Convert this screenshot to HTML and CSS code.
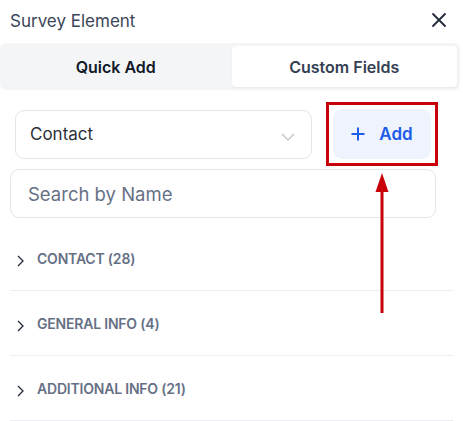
FILE: index.html
```html
<!DOCTYPE html>
<html>
<head>
<meta charset="utf-8">
<link rel="stylesheet" href="styles.css">
</head>
<body>
<div class="panel">
  <div class="header">
    <span class="title">Survey Element</span>
    <svg class="close" width="16" height="16" viewBox="0 0 16 16"><path d="M2 2L14 14M14 2L2 14" stroke="#1f2937" stroke-width="1.8" stroke-linecap="round"/></svg>
  </div>
  <div class="tabs">
    <div class="tab tab-quick">Quick Add</div>
    <div class="tab tab-custom">Custom Fields</div>
  </div>
  <div class="controls">
    <div class="select">
      <span>Contact</span>
      <svg width="14" height="8" viewBox="0 0 14 8"><path d="M1 1L7 7L13 1" fill="none" stroke="#b8bcc4" stroke-width="1.1"/></svg>
    </div>
    <div class="add-btn">
      <svg width="14" height="14" viewBox="0 0 14 14"><path d="M7 0.5V13.5M0.5 7H13.5" stroke="#1d5ce8" stroke-width="2"/></svg>
      <span>Add</span>
    </div>
  </div>
  <div class="search">Search by Name</div>
  <div class="list">
    <div class="row"><svg width="7" height="12" viewBox="0 0 7 12"><path d="M1 1L6 6L1 11" fill="none" stroke="#1f2937" stroke-width="1.3"/></svg><span>CONTACT (28)</span></div>
    <div class="row"><svg width="7" height="12" viewBox="0 0 7 12"><path d="M1 1L6 6L1 11" fill="none" stroke="#1f2937" stroke-width="1.3"/></svg><span>GENERAL INFO (4)</span></div>
    <div class="row"><svg width="7" height="12" viewBox="0 0 7 12"><path d="M1 1L6 6L1 11" fill="none" stroke="#1f2937" stroke-width="1.3"/></svg><span>ADDITIONAL INFO (21)</span></div>
  </div>
  <div class="highlight"></div>
  <svg class="arrow" width="16" height="142" viewBox="0 0 16 142"><path d="M8 0L14.5 19H1.5Z" fill="#c8000a"/><rect x="6.5" y="18" width="3" height="122" fill="#c8000a"/></svg>
</div>
</body>
</html>
```
FILE: styles.css
```css
* { box-sizing: border-box; }
body {
  margin: 0;
  background: #ffffff;
  font-family: Inter, "Noto Sans", "Liberation Sans", sans-serif;
}
.panel {
  position: relative;
  width: 463px;
  height: 421px;
  overflow: hidden;
}
.header {
  height: 43px;
  display: flex;
  align-items: center;
  justify-content: space-between;
  padding: 0 16px 2px 10px;
}
.title {
  font-size: 17px;
  color: #3b4658;
}
.close { margin-top: -2px; }
.tabs {
  width: 460px;
  height: 47px;
  background: #f4f5f7;
  border-radius: 6px;
  padding: 3px;
  display: flex;
  gap: 3px;
}
.tab {
  flex: 1;
  display: flex;
  align-items: center;
  justify-content: center;
  font-size: 16px;
  font-weight: 600;
  border-radius: 4px;
}
.tab-quick { color: #111827; }
.tab-custom {
  background: #ffffff;
  color: #344054;
  box-shadow: 0 1px 2px rgba(16, 24, 40, 0.05);
}
.controls {
  display: flex;
  align-items: center;
  padding: 19px 0 0 15px;
  gap: 21px;
}
.select {
  width: 297px;
  height: 49px;
  border: 1px solid #e3e5e9;
  border-radius: 9px;
  display: flex;
  align-items: center;
  justify-content: space-between;
  padding: 0 16px 0 14px;
  font-size: 17px;
  color: #2b2f36;
}
.select svg { margin-top: 5px; }
.add-btn {
  width: 98px;
  height: 50px;
  background: #eef3fe;
  border-radius: 9px;
  display: flex;
  align-items: center;
  justify-content: center;
  gap: 14px;
  font-size: 17px;
  font-weight: 600;
  color: #1d5ce8;
}
.search {
  margin: 10px 0 0 10px;
  width: 426px;
  height: 49px;
  border: 1px solid #e3e5e9;
  border-radius: 9px;
  display: flex;
  align-items: center;
  padding-left: 17px;
  font-size: 18.5px;
  color: #667085;
}
.list {
  margin: 8px 0 0 10px;
  width: 443px;
}
.row {
  height: 65px;
  border-bottom: 1px solid #eceef2;
  display: flex;
  align-items: center;
  padding-left: 7px;
  gap: 13px;
  font-size: 14px;
  font-weight: 600;
  letter-spacing: -0.2px;
  color: #667085;
}
.row span { margin-top: 1px; }
.row svg { margin-top: 5px; }
.highlight {
  position: absolute;
  left: 326px;
  top: 102px;
  width: 112px;
  height: 64px;
  border: 3px solid #c8000a;
}
.arrow {
  position: absolute;
  left: 374px;
  top: 173px;
}
```
